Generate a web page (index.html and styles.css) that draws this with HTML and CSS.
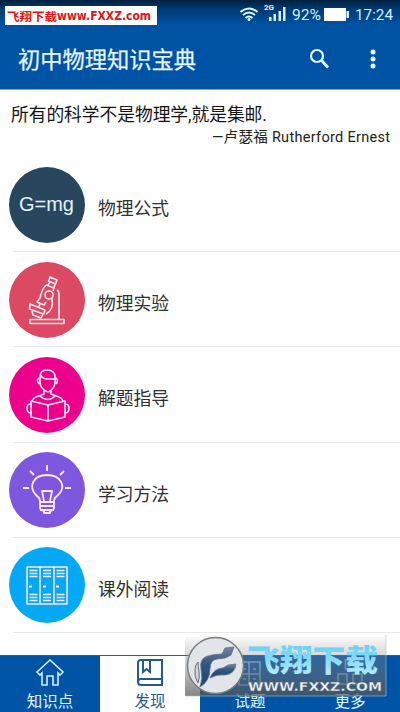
FILE: index.html
```html
<!DOCTYPE html>
<html lang="zh-CN">
<head>
<meta charset="utf-8">
<title>初中物理知识宝典</title>
<link rel="stylesheet" href="styles.css">
</head>
<body>
<div class="app">
  <header class="header">
    <div class="status">
      <div class="site-tag"><svg width="152" height="19"><text x="2" y="15" textLength="50" lengthAdjust="spacingAndGlyphs" class="tag-cn">飞翔下载</text><text x="52" y="14" textLength="94" lengthAdjust="spacingAndGlyphs" class="tag-url">www.FXXZ.com</text></svg></div>
      <svg class="status-icons" width="160" height="28" viewBox="240 0 160 28">
        <g fill="none" stroke="#e3f6ff" stroke-width="2"><path d="M240.500 12Q249 5 257.500 12M243 15Q249 10 255 15M245.500 18Q249 15 252.500 18"/></g>
        <circle cx="249" cy="19.500" r="1.500" fill="#e3f6ff"/>
        <text x="264" y="10" class="net" textLength="10" lengthAdjust="spacingAndGlyphs">2G</text>
        <path d="M269 17h2.500v4h-2.500zM273.500 14h2.500v7h-2.500zM278.500 11h2.500v10h-2.500zM283 7h2.500v14h-2.500z" fill="#d6efff"/>
        <text x="292" y="20" class="stat" textLength="29" lengthAdjust="spacingAndGlyphs">92%</text>
        <rect x="324" y="8" width="22" height="13" fill="#fff"/><rect x="346.500" y="11" width="2.500" height="7" fill="#dcefff"/>
        <text x="355" y="20" class="stat" textLength="38" lengthAdjust="spacingAndGlyphs">17:24</text>
      </svg>
    </div>
    <div class="toolbar">
      <h1><svg width="180" height="32"><text x="0" y="25" textLength="178">初中物理知识宝典</text></svg></h1>
      <div class="actions">
        <svg width="22" height="22" viewBox="0 0 22 22" fill="none" stroke="#e3faff"><circle cx="8" cy="8" r="6" stroke-width="2.200"/><path d="M12.500 12.500L19 19.500" stroke-width="2.800"/></svg>
        <svg width="8" height="22" viewBox="0 0 8 22" fill="#e3faff"><circle cx="4" cy="4" r="2.500"/><circle cx="4" cy="11" r="2.500"/><circle cx="4" cy="18" r="2.500"/></svg>
      </div>
    </div>
  </header>
  <section class="quote">
    <svg width="400" height="58"><text x="11" y="31" class="saying" textLength="256">所有的科学不是物理学,就是集邮.</text><text x="212" y="52" class="author" textLength="178">—卢瑟福 Rutherford Ernest</text></svg>
  </section>
  <main class="list">
    <div class="row"><div class="disc navy"><svg viewBox="0 0 76 76"><text x="10" y="44" class="formula" textLength="55" lengthAdjust="spacingAndGlyphs">G=mg</text></svg></div><span>物理公式</span></div>
    <div class="row"><div class="disc red"><svg viewBox="0 0 76 76"><path d="M41 15l7 3-1.500 4-7-3zM41 20l-2 3M46 22l-1 4M37 23l8 3-1 3M37 23q-4 4-6 13l-3 4 7 3 2-3M31 41l-1 4M21 42l15 6-1.500 4-14-5zM23 49l1 4 8 3 2-4M36 48l-1 4M48 28q2 1 2 5v24M43 36q2 12-6 16"/><path d="M21 57.500h34v4H21z"/><circle cx="40" cy="33" r="4"/></svg></div><span>物理实验</span></div>
    <div class="row"><div class="disc pink"><svg viewBox="0 0 76 76"><path d="M31 20q0-7 7-7 8 0 8 7v5q0 7-7 10-8-3-8-10zM31 17q2 5 8 5h7M30 21q-3 2 0 6M47 21q3 2 0 6M35 33v4l-8 3q-3 1-4 4M42 33v4l8 3q3 1 4 4M31 39q8 7 15 0M22 44l17 4 17-4v16l-17 4-17-4zM39 48v16M22 47q-4 0-4 4 0 5 4 5M56 47q4 0 4 4 0 5-4 5"/></svg></div><span>解题指导</span></div>
    <div class="row"><div class="disc purple"><svg viewBox="0 0 76 76"><path d="M31 49q0-3-3-5c-10-10-3-21 10-21s21 11 10 21q-3 2-3 5v7q0 2-4 3v2h-6v-2q-4-1-4-3zM31 50h14M31 54h14M31 58h14M35 49l-2-10h10l-2 10M38 13v6M21 19l4 4M55 19l-4 4M14 36h6M56 36h6" stroke-width="1.800"/></svg></div><span>学习方法</span></div>
    <div class="row"><div class="disc cyan"><svg viewBox="0 0 76 76"><path d="M18 20h40v37H18zM31 20v37M45 20v37" stroke-width="1.500"/><path d="M20.500 23.500h8M20.500 26.500h8M20.500 29.500h8M34 23.500h8M34 26.500h8M34 29.500h8M47.500 23.500h8M47.500 26.500h8M47.500 29.500h8M20.500 47.500h8M20.500 50.500h8M20.500 53.500h8M34 47.500h8M34 50.500h8M34 53.500h8M47.500 47.500h8M47.500 50.500h8M47.500 53.500h8" stroke-width="1.300"/><path d="M20 39.500h3M34 39.500h3M47 39.500h3" stroke-width="2"/></svg></div><span>课外阅读</span></div>
  </main>
  <nav class="tabs">
    <div class="tab"><svg width="30" height="31" viewBox="0 0 30 31"><path d="M2 15L15 3l13 12-3 3-2-2v12h-5v-9h-6v9H7V16l-2 2z"/></svg><span>知识点</span></div>
    <div class="tab active"><svg width="30" height="31" viewBox="0 0 30 31"><path d="M3 25V6q0-3 3-3h21v25H6q-3 0-3-3t3-3h21M8 3v12l3.500-3 3.500 3V3"/></svg><span>发现</span></div>
    <div class="tab"><svg width="30" height="31" viewBox="0 0 30 31"><path d="M4 5h21v23H4zM4 17h21M14 5v23M8 12h3M18 12h3M8 22h3M18 22h3"/></svg><span>试题</span></div>
    <div class="tab"><svg width="30" height="31" viewBox="0 0 30 31"><path d="M10.500 3h9v9h-9zM3 17h9v10H3zM18 17h9v10h-9z"/></svg><span>更多</span></div>
  </nav>
  <svg class="watermark" width="202" height="62" viewBox="185 635 202 62">
    <defs>
      <linearGradient id="shade" x2="0" y2="1"><stop stop-color="#777" stop-opacity="0"/><stop offset=".35" stop-color="#888" stop-opacity=".34"/><stop offset="1" stop-color="#555" stop-opacity=".72"/></linearGradient>
      <linearGradient id="ice" x2="0" y2="1"><stop stop-color="#5bc9ef"/><stop offset=".55" stop-color="#86dcf7"/><stop offset="1" stop-color="#c4f0fc"/></linearGradient>
      <linearGradient id="ink" x2="0" y2="1"><stop stop-color="#75879c"/><stop offset=".4" stop-color="#315883"/><stop offset="1" stop-color="#1d4272"/></linearGradient>
    </defs>
    <rect x="185" y="635" width="201" height="61" fill="url(#shade)"/>
    <path d="M185 696h201v-61" fill="none" stroke="#b6c3d3" stroke-opacity=".6"/>
    <circle cx="215.500" cy="665.500" r="28" fill="#e2e5e8" stroke="#7a7d82" stroke-width="1.500"/>
    <path d="M200 687Q203 679 201 669 199 658 208 656 214 654 222 654L225 648 234 647 231 655Q226 659 217 659 210 660 210 669 210 681 200 687Z" fill="url(#ink)" stroke="#647084" stroke-width=".8"/>
    <path d="M210 678Q214 668 223 668L228 665 236 664Q235 674 225 675 217 674 210 678Z" fill="url(#ink)" stroke="#647084" stroke-width=".8"/>
    <path d="M198 683q-4-6-3-13 0-5 3-8 0 5 1 9 1 6-1 12z" fill="#cfd4da" stroke="#68727e"/>
    <text x="247" y="671" class="wm-name" textLength="131" lengthAdjust="spacingAndGlyphs">飞翔下载</text>
    <text x="248" y="691" class="wm-url" textLength="134" lengthAdjust="spacingAndGlyphs">WWW.FXXZ.COM</text>
  </svg>
</div>
</body>
</html>
```
FILE: styles.css
```css
* { box-sizing: border-box; }
body { margin: 0; background: #fefefe; font-family: Roboto, "Noto Sans CJK SC", sans-serif; }
svg { display: block; }
.app { position: relative; width: 400px; height: 712px; display: flex; flex-direction: column; overflow: hidden; }
.header { height: 90px; flex: none; background: linear-gradient(#001f3c 0, #003a75 9px, #0053a3 25px, #0054a5 100%); border-bottom: 1px solid #85acd3; }
.status { height: 28px; display: flex; justify-content: space-between; align-items: flex-start; }
.site-tag { margin: 6px 0 0 5px; width: 152px; height: 19px; background: #fff; }
.tag-cn { font: 700 11.5px "Noto Sans CJK SC", sans-serif; fill: #e51217; }
.tag-url { font: 700 11.5px "DejaVu Sans", sans-serif; fill: #e51217; }
.net { font: 700 7px Roboto, sans-serif; fill: #e3f6ff; }
.stat { font: 15.5px Roboto, sans-serif; fill: #d4edff; }
.toolbar { height: 61px; display: flex; align-items: center; justify-content: space-between; padding: 0 23px 0 18px; }
h1 { margin: 0; font-size: 22.3px; font-weight: 400; }
h1 text { fill: #e6f7ff; stroke: #e6f7ff; stroke-width: .25; }
.actions { display: flex; gap: 38px; }
.quote { height: 67px; flex: none; }
.saying { font-size: 17.8px; fill: #151515; }
.author { font-size: 14.5px; fill: #222; }
.list { flex: 1; }
.row { height: 95.2px; margin-left: 13px; border-bottom: 1px solid #e8e8e8; display: flex; align-items: center; }
.disc { width: 76px; height: 76px; border-radius: 50%; margin: 1px 0 0 -4px; flex: none; }
.disc svg { width: 76px; height: 76px; fill: none; stroke: #ffe8f3; stroke-width: 1.6; stroke-linejoin: round; }
.disc .formula { font: 21px "Liberation Sans", sans-serif; fill: #e1f3ff; stroke: none; }
.navy { background: #29465f; }
.red { background: #dc4962; }
.pink { background: #ec008c; }
.purple { background: #7e57df; }
.cyan { background: #03a9f4; }
.row span { font-size: 17.8px; line-height: 26px; margin: 10px 0 0 13px; color: #303030; }
.tabs { height: 57px; flex: none; display: grid; grid-template-columns: repeat(4, 1fr); border-top: 1px solid #245f94; }
.tab { background: #0054a5; color: #e3f6ff; display: flex; flex-direction: column; align-items: center; padding-top: 1px; font-size: 15.5px; line-height: 20px; }
.tab svg { fill: none; stroke: #d3efff; stroke-width: 1.6; flex: none; }
.tab span { margin-top: 4px; }
.tab:nth-child(n+3) svg { opacity: .55; }
.tab.active { background: #fefefe; color: #245b8d; }
.tab.active svg { stroke: #245b8d; stroke-width: 2; }
.watermark { position: absolute; left: 185px; top: 635px; overflow: visible; }
.wm-name { font: 900 30px/1 "Noto Sans CJK SC", sans-serif; fill: url(#ice); }
.wm-url { font: 700 13px/1 "DejaVu Sans", sans-serif; fill: #f1f4f8; stroke: #4b5562; stroke-width: .3; }
```
